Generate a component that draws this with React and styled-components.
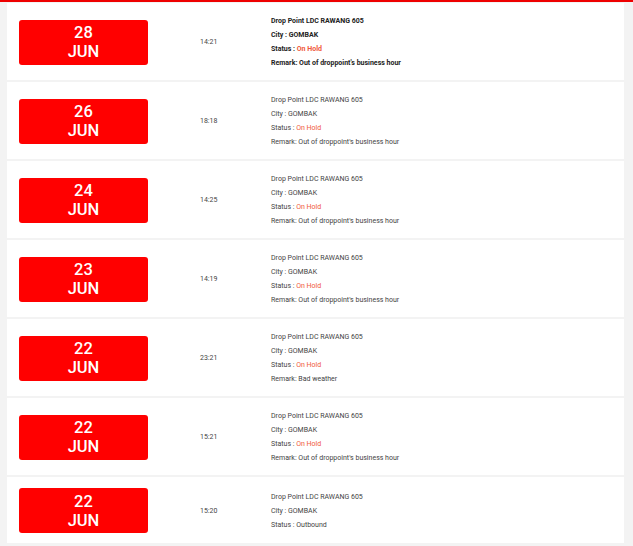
import React from "react"
import styled, { createGlobalStyle } from "styled-components"

const GlobalStyle = createGlobalStyle`
  html, body {
    margin: 0;
    padding: 0;
    background: #f3f3f3;
    font-family: Roboto, "Liberation Sans", Arial, sans-serif;
  }
`

const history = [
  { day: "28", month: "JUN", time: "14:21", status: "On Hold", remark: "Out of droppoint's business hour", latest: true },
  { day: "26", month: "JUN", time: "18:18", status: "On Hold", remark: "Out of droppoint's business hour" },
  { day: "24", month: "JUN", time: "14:25", status: "On Hold", remark: "Out of droppoint's business hour" },
  { day: "23", month: "JUN", time: "14:19", status: "On Hold", remark: "Out of droppoint's business hour" },
  { day: "22", month: "JUN", time: "23:21", status: "On Hold", remark: "Bad weather" },
  { day: "22", month: "JUN", time: "15:21", status: "On Hold", remark: "Out of droppoint's business hour" },
  { day: "22", month: "JUN", time: "15:20", status: "Outbound" },
]

export default function App() {
  return (
    <>
      <GlobalStyle />
      <Page>
        <TopBar />
        <List>
          {history.map((item, i) => (
            <Card key={i}>
              <DateBox>
                <DateLine>{item.day}</DateLine>
                <DateLine>{item.month}</DateLine>
              </DateBox>
              <Time>{item.time}</Time>
              <Details bold={item.latest}>
                <Line>Drop Point LDC RAWANG 605</Line>
                <Line>City : GOMBAK</Line>
                <Line>
                  Status :{" "}
                  {item.status === "On Hold" ? (
                    <Hold>{item.status}</Hold>
                  ) : (
                    item.status
                  )}
                </Line>
                {item.remark && <Line>Remark: {item.remark}</Line>}
              </Details>
            </Card>
          ))}
        </List>
      </Page>
    </>
  )
}

//================================================

const Page = styled.div`
  width: 633px;
  min-height: 546px;
`

const TopBar = styled.div`
  height: 2px;
  background: #ee0000;
`

const List = styled.div`
  display: flex;
  flex-direction: column;
  gap: 2px;
  padding: 1px 9px 0 7px;
`

const Card = styled.div`
  display: flex;
  align-items: center;
  background: #ffffff;
  padding: 11px 0 10px 12px;
`

const DateBox = styled.div`
  width: 129px;
  height: 45px;
  flex-shrink: 0;
  background: #ff0000;
  border-radius: 3px;
  color: #ffffff;
  display: flex;
  flex-direction: column;
  align-items: center;
  justify-content: center;
`

const DateLine = styled.div`
  font-size: 16.5px;
  line-height: 19px;
  font-weight: 500;
`

const Time = styled.div`
  width: 71px;
  padding-left: 52px;
  font-size: 7px;
  color: #444444;
`

const Details = styled.div`
  display: flex;
  flex-direction: column;
  font-size: 7px;
  line-height: 14px;
  color: ${props => (props.bold ? "#222222" : "#444444")};
  font-weight: ${props => (props.bold ? 700 : 400)};
`

const Line = styled.div`
  white-space: nowrap;
`

const Hold = styled.span`
  color: #f0583a;
`
